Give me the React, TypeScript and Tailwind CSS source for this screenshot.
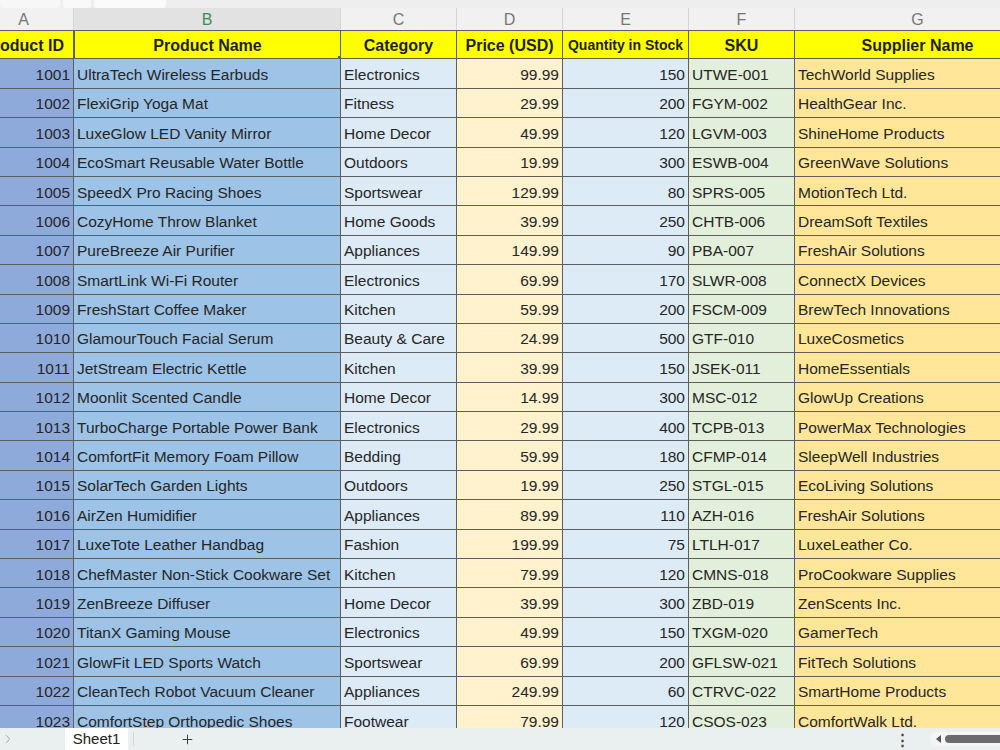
import { Plus, ChevronRight } from "lucide-react";

interface Product {
  id: number;
  name: string;
  category: string;
  price: string;
  qty: number;
  sku: string;
  supplier: string;
}

const products: Product[] = [
  { id: 1001, name: "UltraTech Wireless Earbuds", category: "Electronics", price: "99.99", qty: 150, sku: "UTWE-001", supplier: "TechWorld Supplies" },
  { id: 1002, name: "FlexiGrip Yoga Mat", category: "Fitness", price: "29.99", qty: 200, sku: "FGYM-002", supplier: "HealthGear Inc." },
  { id: 1003, name: "LuxeGlow LED Vanity Mirror", category: "Home Decor", price: "49.99", qty: 120, sku: "LGVM-003", supplier: "ShineHome Products" },
  { id: 1004, name: "EcoSmart Reusable Water Bottle", category: "Outdoors", price: "19.99", qty: 300, sku: "ESWB-004", supplier: "GreenWave Solutions" },
  { id: 1005, name: "SpeedX Pro Racing Shoes", category: "Sportswear", price: "129.99", qty: 80, sku: "SPRS-005", supplier: "MotionTech Ltd." },
  { id: 1006, name: "CozyHome Throw Blanket", category: "Home Goods", price: "39.99", qty: 250, sku: "CHTB-006", supplier: "DreamSoft Textiles" },
  { id: 1007, name: "PureBreeze Air Purifier", category: "Appliances", price: "149.99", qty: 90, sku: "PBA-007", supplier: "FreshAir Solutions" },
  { id: 1008, name: "SmartLink Wi-Fi Router", category: "Electronics", price: "69.99", qty: 170, sku: "SLWR-008", supplier: "ConnectX Devices" },
  { id: 1009, name: "FreshStart Coffee Maker", category: "Kitchen", price: "59.99", qty: 200, sku: "FSCM-009", supplier: "BrewTech Innovations" },
  { id: 1010, name: "GlamourTouch Facial Serum", category: "Beauty & Care", price: "24.99", qty: 500, sku: "GTF-010", supplier: "LuxeCosmetics" },
  { id: 1011, name: "JetStream Electric Kettle", category: "Kitchen", price: "39.99", qty: 150, sku: "JSEK-011", supplier: "HomeEssentials" },
  { id: 1012, name: "Moonlit Scented Candle", category: "Home Decor", price: "14.99", qty: 300, sku: "MSC-012", supplier: "GlowUp Creations" },
  { id: 1013, name: "TurboCharge Portable Power Bank", category: "Electronics", price: "29.99", qty: 400, sku: "TCPB-013", supplier: "PowerMax Technologies" },
  { id: 1014, name: "ComfortFit Memory Foam Pillow", category: "Bedding", price: "59.99", qty: 180, sku: "CFMP-014", supplier: "SleepWell Industries" },
  { id: 1015, name: "SolarTech Garden Lights", category: "Outdoors", price: "19.99", qty: 250, sku: "STGL-015", supplier: "EcoLiving Solutions" },
  { id: 1016, name: "AirZen Humidifier", category: "Appliances", price: "89.99", qty: 110, sku: "AZH-016", supplier: "FreshAir Solutions" },
  { id: 1017, name: "LuxeTote Leather Handbag", category: "Fashion", price: "199.99", qty: 75, sku: "LTLH-017", supplier: "LuxeLeather Co." },
  { id: 1018, name: "ChefMaster Non-Stick Cookware Set", category: "Kitchen", price: "79.99", qty: 120, sku: "CMNS-018", supplier: "ProCookware Supplies" },
  { id: 1019, name: "ZenBreeze Diffuser", category: "Home Decor", price: "39.99", qty: 300, sku: "ZBD-019", supplier: "ZenScents Inc." },
  { id: 1020, name: "TitanX Gaming Mouse", category: "Electronics", price: "49.99", qty: 150, sku: "TXGM-020", supplier: "GamerTech" },
  { id: 1021, name: "GlowFit LED Sports Watch", category: "Sportswear", price: "69.99", qty: 200, sku: "GFLSW-021", supplier: "FitTech Solutions" },
  { id: 1022, name: "CleanTech Robot Vacuum Cleaner", category: "Appliances", price: "249.99", qty: 60, sku: "CTRVC-022", supplier: "SmartHome Products" },
  { id: 1023, name: "ComfortStep Orthopedic Shoes", category: "Footwear", price: "79.99", qty: 120, sku: "CSOS-023", supplier: "ComfortWalk Ltd." },
];

const columnLetters = ["A", "B", "C", "D", "E", "F", "G"];
const headers = ["Product ID", "Product Name", "Category", "Price (USD)", "Quantity in Stock", "SKU", "Supplier Name"];

const gridCols = "grid grid-cols-[100px_267px_116px_106px_126px_106px_246px]";
const cell = "flex h-[29.4px] items-center overflow-hidden whitespace-nowrap border-r border-b border-[#5e5e5e] px-[3px] pt-[2px]";

export default function App() {
  return (
    <div
      className="flex h-screen w-full flex-col overflow-hidden bg-white text-[#262626]"
      style={{ fontFamily: '"Liberation Sans", Arial, sans-serif' }}
    >
      {/* toolbar remnant */}
      <div className="flex h-[8px] shrink-0 gap-[3px] bg-[#eeeeee]">
        <div className="w-[60px] rounded-b-[3px] bg-[#f7f7f7]" />
        <div className="w-[28px] rounded-b-[3px] bg-[#f9f9f9]" />
        <div className="w-[72px] rounded-b-[3px] bg-[#fbfbfb]" />
      </div>

      <div className="min-h-0 flex-1 overflow-hidden">
        <div className="-ml-[26px] w-max">
          {/* column letters */}
          <div className={`${gridCols} h-[22px] bg-[#f1f1f1] text-[16px] text-[#777777]`}>
            {columnLetters.map((letter) => (
              <div
                key={letter}
                className={`flex items-center justify-center border-r border-[#d6d6d6] ${
                  letter === "B" ? "bg-[#e2e2e2] text-[#3f8a5c]" : ""
                }`}
              >
                {letter}
              </div>
            ))}
          </div>

          {/* header row */}
          <div className={`${gridCols} bg-[#ffff00] font-bold text-[#1f1f1f]`}>
            {headers.map((h, i) => (
              <div
                key={h}
                className={`${cell} relative justify-center ${i === 4 ? "text-[14px]" : "text-[16px]"} ${
                  i === 1 ? "border border-[#3b8a58]" : "border-t border-t-[#5e5e5e]"
                }`}
              >
                {h}
                {i === 1 && (
                  <span className="absolute -right-[3px] -bottom-[3px] h-[5px] w-[5px] bg-[#2f7d4b]" />
                )}
              </div>
            ))}
          </div>

          {/* data rows */}
          {products.map((p) => (
            <div key={p.id} className={`${gridCols} text-[15.5px]`}>
              <div className={`${cell} justify-end bg-[#8eaadb]`}>{p.id}</div>
              <div className={`${cell} bg-[#9dc3e6]`}>{p.name}</div>
              <div className={`${cell} bg-[#ddebf7]`}>{p.category}</div>
              <div className={`${cell} justify-end bg-[#fff2cc]`}>{p.price}</div>
              <div className={`${cell} justify-end bg-[#ddebf7]`}>{p.qty}</div>
              <div className={`${cell} bg-[#e2efda]`}>{p.sku}</div>
              <div className={`${cell} bg-[#ffe699]`}>{p.supplier}</div>
            </div>
          ))}
        </div>
      </div>

      {/* sheet tabs */}
      <div className="flex h-[22px] shrink-0 items-center bg-[#eaf0f0] text-[15px]">
        <ChevronRight className="ml-[1px] size-[14px] text-[#9a9a9a]" strokeWidth={1.5} />
        <div className="ml-[50px] flex h-full w-[63px] items-center justify-center bg-white text-[#222222]">
          Sheet1
        </div>
        <div className="ml-[5px] h-[14px] w-px bg-[#cfd6d6]" />
        <Plus className="ml-[46px] size-[15px] text-[#333333]" strokeWidth={1.5} />
        <div className="ml-auto flex items-center">
          <span className="text-[15px] font-bold leading-none text-[#444444]">⋮</span>
          <div className="ml-[20px] flex h-[14px] w-[70px] items-center rounded-l-full bg-[#f4f6f6] pl-[6px]">
            <span className="h-0 w-0 border-y-[4px] border-r-[5px] border-y-transparent border-r-[#555555]" />
            <span className="ml-[4px] h-[8px] flex-1 rounded-l-full bg-[#6b6b6b]" />
          </div>
        </div>
      </div>
    </div>
  );
}
